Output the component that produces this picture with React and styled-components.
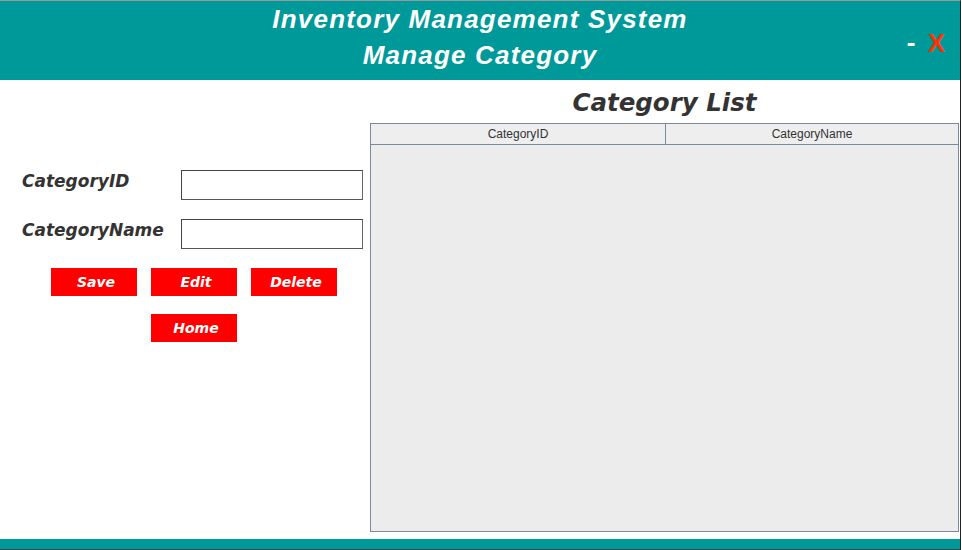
import styled, { createGlobalStyle } from "styled-components";

const GlobalStyle = createGlobalStyle`
    body {
        margin: 0;
        background: #ffffff;
        font-family: "Liberation Sans", Arial, sans-serif;
    }
`;

const teal = "#009999";

export default function App() {
    return (
        <>
            <GlobalStyle />
            <Frame>
                <Header>
                    <span />
                    <Titles>
                        <Title>Inventory Management System</Title>
                        <Title>Manage Category</Title>
                    </Titles>
                    <Controls>
                        <Minimize>-</Minimize>
                        <Close>X</Close>
                    </Controls>
                </Header>
                <Body>
                    <FormPanel>
                        <FieldRow>
                            <Label>CategoryID</Label>
                            <Input type="text" />
                        </FieldRow>
                        <FieldRow>
                            <Label>CategoryName</Label>
                            <Input type="text" />
                        </FieldRow>
                        <Buttons>
                            <Button>Save</Button>
                            <Button>Edit</Button>
                            <Button>Delete</Button>
                            <Button $col={2}>Home</Button>
                        </Buttons>
                    </FormPanel>
                    <ListPanel>
                        <ListTitle>Category List</ListTitle>
                        <Table>
                            <HeadRow>
                                <HeadCell>CategoryID</HeadCell>
                                <HeadCell>CategoryName</HeadCell>
                            </HeadRow>
                            <TableBody />
                        </Table>
                    </ListPanel>
                </Body>
                <Footer />
            </Frame>
        </>
    );
}

const Frame = styled.div`
    width: 960px;
    height: 549px;
    border-top: 1px solid #9a9a9a;
    border-right: 1px solid #222;
    display: flex;
    flex-direction: column;
    background: #fff;
`;

const Header = styled.div`
    height: 79px;
    background: ${teal};
    display: grid;
    grid-template-columns: 1fr auto 1fr;
    align-items: start;
`;

const Titles = styled.div`
    display: flex;
    flex-direction: column;
    align-items: center;
`;

const Title = styled.div`
    color: #fff;
    font-family: "Liberation Sans", Arial, sans-serif;
    font-weight: bold;
    font-style: italic;
    font-size: 26px;
    letter-spacing: 1.2px;
    line-height: 36px;
    white-space: nowrap;
`;

const Controls = styled.div`
    justify-self: end;
    display: flex;
    align-items: center;
    gap: 12px;
    padding: 27px 15px 0 0;
`;

const Minimize = styled.span`
    color: #fff;
    font-family: "DejaVu Sans", sans-serif;
    font-weight: bold;
    font-size: 22px;
`;

const Close = styled.span`
    color: #ff3300;
    font-family: "Liberation Sans", Arial, sans-serif;
    font-weight: bold;
    font-size: 26px;
`;

const Body = styled.div`
    flex: 1;
    display: flex;
`;

const FormPanel = styled.div`
    width: 370px;
    padding: 90px 0 0 22px;
    box-sizing: border-box;
    display: flex;
    flex-direction: column;
    gap: 19px;
`;

const FieldRow = styled.div`
    display: grid;
    grid-template-columns: 159px 182px;
    align-items: start;
`;

const Label = styled.div`
    color: #333;
    font-family: "DejaVu Sans", sans-serif;
    font-weight: bold;
    font-style: italic;
    font-size: 17px;
    line-height: 20px;
    padding-top: 1px;
    white-space: nowrap;
`;

const Input = styled.input`
    width: 182px;
    height: 30px;
    box-sizing: border-box;
    border: 1px solid #444;
    border-right-color: #666;
    border-bottom-color: #555;
    margin: 0;
    padding: 0 4px;
    background: #fff;
    outline: none;
`;

const Buttons = styled.div`
    display: grid;
    grid-template-columns: repeat(3, 86px);
    column-gap: 14px;
    row-gap: 18px;
    padding-left: 29px;
`;

const Button = styled.button`
    grid-column: ${(p) => p.$col || "auto"};
    height: 28px;
    border: none;
    background: #ff0000;
    color: #fff;
    font-family: "DejaVu Sans", sans-serif;
    font-weight: bold;
    font-style: italic;
    font-size: 14px;
    padding: 0 0 0 4px;
    cursor: pointer;
`;

const ListPanel = styled.div`
    display: flex;
    flex-direction: column;
    width: 589px;
    padding-bottom: 7px;
`;

const ListTitle = styled.div`
    text-align: center;
    color: #333;
    font-family: "DejaVu Sans", sans-serif;
    font-weight: bold;
    font-style: italic;
    font-size: 24.5px;
    line-height: 46px;
    height: 43px;
`;

const Table = styled.div`
    flex: 1;
    border: 1px solid #7a8a9a;
    background: #ececec;
    display: flex;
    flex-direction: column;
`;

const HeadRow = styled.div`
    display: grid;
    grid-template-columns: 294px 1fr;
    height: 20px;
    border-bottom: 1px solid #7a8a9a;
`;

const HeadCell = styled.div`
    height: 20px;
    background: #eeeeee;
    color: #333;
    font-size: 12px;
    line-height: 21px;
    text-align: center;
    overflow: hidden;
    & + & {
        border-left: 1px solid #7a8a9a;
    }
`;

const TableBody = styled.div`
    flex: 1;
    background: #ececec;
`;

const Footer = styled.div`
    height: 10px;
    background: ${teal};
    border-bottom: 1px solid #444;
`;
